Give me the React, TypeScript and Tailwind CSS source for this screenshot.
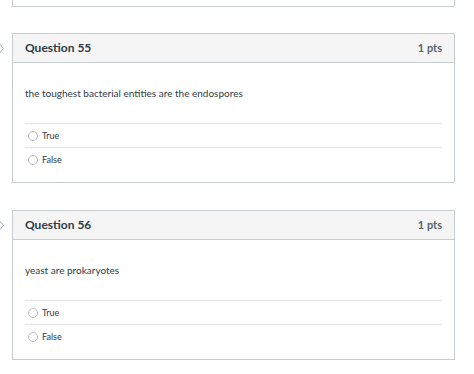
import React from 'react'

const Flag = () => (
  <svg className="absolute left-[-34px] top-[6px]" width="26" height="17" viewBox="0 0 26 17">
    <path d="M1 1.5 H18.5 L24.5 8.5 L18.5 15.5 H1 Z" fill="#ffffff" stroke="#9fb2c4" strokeWidth="1" />
  </svg>
)

const Answer = ({ label, last }: { label: string; last?: boolean }) => (
  <div className={`flex items-center h-[24px] pl-[3px] ${last ? '' : 'border-b border-[#e3e6e8]'}`}>
    <span className="w-[10px] h-[10px] rounded-full border border-[#bcc1c5] bg-white mr-[4px]" />
    <span className="text-[9px] text-[#2d3b45]">{label}</span>
  </div>
)

const Question = ({ num, text }: { num: number; text: string }) => (
  <div className="relative w-[443px] border border-[#c7cdd1] bg-white">
    <Flag />
    <div className="flex items-center justify-between h-[29px] px-[12px] bg-[#f5f5f5] border-b border-[#c7cdd1]">
      <h3 className="text-[12px] font-bold text-[#2d3b45]">Question {num}</h3>
      <span className="text-[11px] font-bold text-[#5a646b]">1 pts</span>
    </div>
    <div className="px-[12px] pt-[22px] pb-[10px]">
      <p className="text-[10px] text-[#2d3b45] h-[16px] leading-[16px]">{text}</p>
      <div className="mt-[22px] border-t border-[#e3e6e8]">
        <Answer label="True" />
        <Answer label="False" last />
      </div>
    </div>
  </div>
)

const App = () => {
  return (
    <main className="w-[474px] h-[374px] bg-white overflow-hidden pl-[12px]" style={{ fontFamily: 'Lato, "Noto Sans", sans-serif' }}>
      <div className="w-[443px] h-[7px] border-x border-b border-[#c7cdd1]" />
      <div className="mt-[26px] flex flex-col gap-[27px]">
        <Question num={55} text="the toughest bacterial entities are the endospores" />
        <Question num={56} text="yeast are prokaryotes" />
      </div>
    </main>
  )
}

export default App
